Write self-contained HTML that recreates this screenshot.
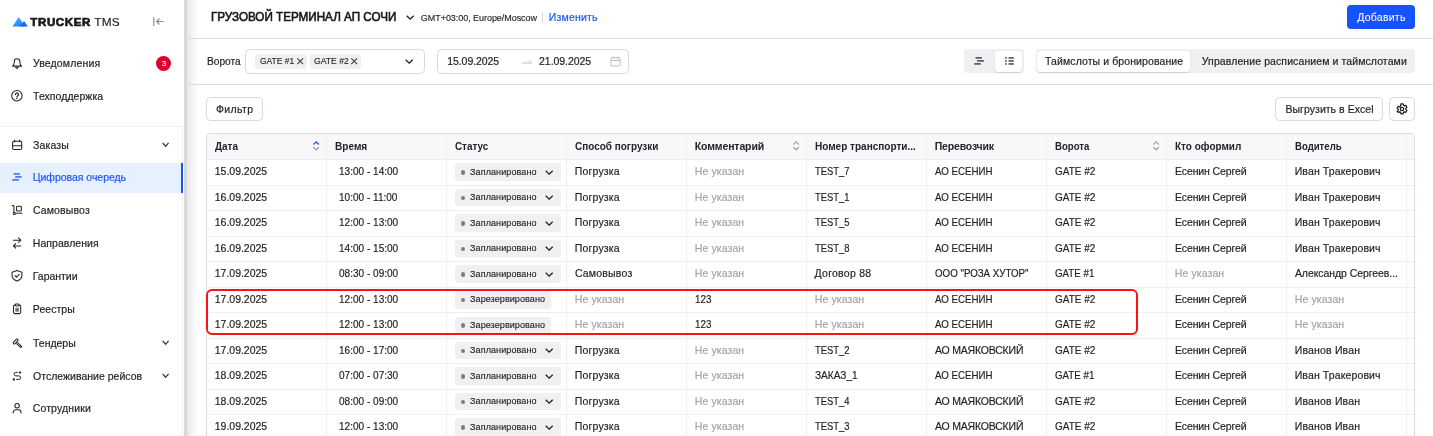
<!DOCTYPE html>
<html lang="ru"><head><meta charset="utf-8"><title>Цифровая очередь</title>
<style>
*{box-sizing:border-box;margin:0;padding:0}
html,body{width:1433px;height:436px;overflow:hidden;background:#fff}
body{font-family:"Liberation Sans",sans-serif;font-size:10.5px;color:#1f1f1f;position:relative}
.a{position:absolute;white-space:nowrap}
.t{position:absolute;white-space:nowrap;transform-origin:0 0;line-height:20px;height:20px;-webkit-text-stroke:0.180px currentColor}
.btn{border:1px solid #d7d9e0;border-radius:4.500px;background:#fff}
.tag{background:#f0f0f2;border-radius:3px}
svg{position:absolute;overflow:visible}
#root{position:absolute;left:0;top:0;width:1433px;height:436px;will-change:transform}
</style></head><body><div id="root">

<div class="a" style="left:0;top:126px;width:183px;height:311px;border-top:1px solid #f0f0f0;border-right:1px solid #f0f0f0"></div>
<div class="a" style="left:184px;top:0;width:3px;height:436px;background:#d8d9de"></div>
<div class="a" style="left:187px;top:0;width:11px;height:436px;background:linear-gradient(90deg,#e7e7ea 0,#f4f4f5 45%,#fff 100%)"></div>
<svg style="left:12px;top:16px" width="17" height="11" viewBox="0 0 17 11"><defs><linearGradient id="lg" x1="0" y1="0" x2="0" y2="1"><stop offset="0" stop-color="#45a8ff"/><stop offset="1" stop-color="#1f86ff"/></linearGradient></defs><path d="M0.6 10.5 L6.8 1 L13 10.5 Z" fill="url(#lg)"/><path d="M7.5 10.500 L12 5 L15.900 10.500 Z" fill="#1769f5"/></svg>
<div class="t" style="left:30.32px;top:12.00px;font-size:11.5px;font-weight:bold;color:#1a1a1a;letter-spacing:0.629px;-webkit-text-stroke:0.700px #1a1a1a;">TRUCKER</div>
<div class="t" style="left:94.35px;top:12.20px;font-size:11.8px;letter-spacing:0.230px;">TMS</div>
<svg style="left:152.500px;top:16.500px" width="11" height="9" viewBox="0 0 11 9" fill="none" stroke="#8a8a8a" stroke-width="1.100"><path d="M0.800 0V9M3.500 4.500H10.500M6.500 1.500L3.500 4.500L6.500 7.500"/></svg>
<div class="a" style="left:0;top:163px;width:181px;height:30px;background:#e6f0ff"></div><div class="a" style="left:180.700px;top:163px;width:2.300px;height:30px;background:#1b56f5"></div>
<svg style="left:0;top:0" width="184" height="436" viewBox="0 0 184 436" fill="none" stroke="#262626" stroke-width="1.050" stroke-linecap="round" stroke-linejoin="round">
<path d="M12.500 66.100C13.700 65.300 14.250 64.300 14.250 62.600V61.500a2.800 2.800 0 0 1 5.600 0V62.600c0 1.700.55 2.700 1.750 3.500Z"/><path d="M15.400 67.300h3.300l-1.650 1.500Z" fill="#222" stroke-width="0.600"/>
<circle cx="16.900" cy="95.700" r="5.200"/><path d="M15.450 94.500a1.500 1.500 0 1 1 2.250 1.300c-.55.300-.75.600-.75 1.100" stroke-width="1.250"/><circle cx="16.950" cy="98.600" r="0.750" fill="#222" stroke="none"/>
<rect x="12.600" y="141.200" width="9.100" height="8.200" rx="1.200"/><path d="M12.600 145.700H21.700M14.600 139.900V141.700M19.700 139.900V141.700"/>
<g fill="#4a7bfa" stroke="none"><rect x="13.700" y="173.100" width="6.200" height="1.700" rx="0.300"/><rect x="15.200" y="176.050" width="6.500" height="1.700" rx="0.300"/><rect x="12.200" y="179" width="6.600" height="1.700" rx="0.300"/></g>
<path d="M12.300 205.600h.8a.8.8 0 0 1 .8.800v5.800M15.600 213.200H22"/><circle cx="14.300" cy="213.400" r="1.050"/><rect x="16.600" y="206.300" width="4.700" height="4.700" rx="0.600"/>
<path d="M13.400 240.200H20.800M18.500 237.900L20.800 240.200L18.500 242.500M20.800 245.900H13.400M15.700 243.600L13.400 245.900L15.700 248.200"/>
<path d="M17 270.400L21.900 272.200V275.600c0 2.600-1.900 4.400-4.900 5.500c-3-1.100-4.900-2.900-4.900-5.500V272.200Z"/><path d="M14.900 275.700l1.500 1.500l2.800-2.900"/>
<rect x="13.500" y="305.100" width="7.200" height="8.500" rx="1.300"/><rect x="15.300" y="304" width="3.600" height="1.900" rx="0.600" fill="#fff"/><rect x="15.300" y="307.800" width="3.600" height="3.900" fill="#777" stroke="none"/>
<rect x="12.750" y="340.450" width="5.800" height="2.100" rx="0.700" transform="rotate(-45 15.650 341.500)"/><path d="M17.700 342.500L21.300 346.100a0.750 0.750 0 0 1-1.060 1.060L16.640 343.560"/>
<path d="M17.400 372.400H15.900a1.750 1.750 0 0 0 0 3.500H18.900a1.750 1.750 0 0 1 0 3.500H16.600" stroke-width="1"/><rect x="19" y="371.400" width="2.100" height="2.100" rx="0.500" fill="#262626" stroke="none"/><rect x="12.800" y="378.350" width="2.100" height="2.100" rx="0.500" fill="#262626" stroke="none"/>
<circle cx="17.100" cy="405.800" r="2.250"/><path d="M13.200 413v-.6a2.600 2.600 0 0 1 2.600-2.600h2.600a2.600 2.600 0 0 1 2.600 2.600v.6"/>
</svg>
<div class="t" style="left:33.02px;top:53.25px;letter-spacing:0.143px;">Уведомления</div>
<div class="t" style="left:33.05px;top:86.15px;letter-spacing:0.043px;">Техподдержка</div>
<div class="t" style="left:32.96px;top:134.95px;letter-spacing:0.166px;">Заказы</div>
<div class="t" style="left:32.80px;top:166.95px;color:#1b56f5;letter-spacing:-0.036px;">Цифровая очередь</div>
<div class="t" style="left:32.99px;top:200.15px;letter-spacing:0.127px;">Самовывоз</div>
<div class="t" style="left:32.80px;top:233.35px;letter-spacing:0.035px;">Направления</div>
<div class="t" style="left:32.80px;top:266.05px;letter-spacing:-0.028px;">Гарантии</div>
<div class="t" style="left:32.80px;top:299.05px;letter-spacing:0.059px;">Реестры</div>
<div class="t" style="left:33.05px;top:332.75px;letter-spacing:-0.028px;">Тендеры</div>
<div class="t" style="left:33.01px;top:365.75px;letter-spacing:0.012px;">Отслеживание рейсов</div>
<div class="t" style="left:32.69px;top:398.15px;letter-spacing:0.135px;">Сотрудники</div>
<div class="a" style="left:156px;top:56px;width:15px;height:15px;border-radius:8px;background:#e0002b"></div>
<div class="t" style="left:161.92px;top:54.00px;font-size:7.5px;-webkit-text-stroke-width:0.130px;color:#fff;">3</div>
<svg style="left:161.900px;top:141.7px" width="7.200" height="5.200" viewBox="0 0 7.200 5.200" fill="none" stroke="#3a3a3a" stroke-width="1.300"><path d="M0.600 0.900L3.600 4.200L6.600 0.900"/></svg>
<svg style="left:161.900px;top:339.5px" width="7.200" height="5.200" viewBox="0 0 7.200 5.200" fill="none" stroke="#3a3a3a" stroke-width="1.300"><path d="M0.600 0.900L3.600 4.200L6.600 0.900"/></svg>
<svg style="left:161.900px;top:372.5px" width="7.200" height="5.200" viewBox="0 0 7.200 5.200" fill="none" stroke="#3a3a3a" stroke-width="1.300"><path d="M0.600 0.900L3.600 4.200L6.600 0.900"/></svg>
<div class="a" style="left:188px;top:37.500px;width:1245px;height:1px;background:#dddde3"></div>
<div class="a" style="left:188px;top:83.500px;width:1245px;height:1px;background:#dddde3"></div>
<div class="t" style="left:210.80px;top:6.70px;font-size:12px;color:#16181c;transform:scaleX(0.9717);-webkit-text-stroke:0.600px #16181c;">ГРУЗОВОЙ ТЕРМИНАЛ АП СОЧИ</div>
<svg style="left:405.600px;top:14.800px" width="8.400" height="5" viewBox="0 0 8.400 5" fill="none" stroke="#1f1f1f" stroke-width="1.300"><path d="M0.700 0.700L4.200 4.200L7.700 0.700"/></svg>
<div class="t" style="left:420.83px;top:8.30px;font-size:9px;-webkit-text-stroke-width:0.130px;letter-spacing:-0.048px;">GMT+03:00, Europe/Moscow</div>
<div class="a" style="left:542px;top:11.500px;width:1px;height:11px;background:#d9d9d9"></div>
<div class="t" style="left:548.70px;top:7.40px;color:#1b56f5;letter-spacing:0.207px;">Изменить</div>
<div class="a" style="left:1347px;top:5px;width:68px;height:24px;border-radius:4px;background:#1753fa"></div>
<div class="t" style="left:1357.35px;top:6.80px;color:#fff;letter-spacing:0.229px;-webkit-text-stroke:0.050px #fff;">Добавить</div>
<div class="t" style="left:206.80px;top:51.30px;transform:scaleX(0.9642);">Ворота</div>
<div class="a btn" style="left:245px;top:49px;width:180px;height:25px"></div>
<div class="a tag" style="left:255px;top:54px;width:51.600px;height:15px"></div>
<div class="a tag" style="left:310px;top:54px;width:51px;height:15px"></div>
<div class="t" style="left:260.43px;top:51.10px;font-size:9px;-webkit-text-stroke-width:0.130px;transform:scaleX(0.9423);">GATE #1</div>
<div class="t" style="left:314.33px;top:51.10px;font-size:9px;-webkit-text-stroke-width:0.130px;transform:scaleX(0.9589);">GATE #2</div>
<svg style="left:296.8px;top:58.200px" width="6.400" height="6.400" viewBox="0 0 6.400 6.400" fill="none" stroke="#3a3a3a" stroke-width="1.050"><path d="M0.300 0.300L6.100 6.100M6.100 0.300L0.300 6.100"/></svg>
<svg style="left:351.2px;top:58.200px" width="6.400" height="6.400" viewBox="0 0 6.400 6.400" fill="none" stroke="#3a3a3a" stroke-width="1.050"><path d="M0.300 0.300L6.100 6.100M6.100 0.300L0.300 6.100"/></svg>
<svg style="left:405.200px;top:59px" width="8.400" height="5" viewBox="0 0 8.400 5" fill="none" stroke="#1f1f1f" stroke-width="1.300"><path d="M0.700 0.700L4.200 4.200L7.700 0.700"/></svg>
<div class="a btn" style="left:437px;top:49px;width:192px;height:25px"></div>
<div class="t" style="left:447.22px;top:50.50px;letter-spacing:-0.067px;">15.09.2025</div>
<div class="t" style="left:539.10px;top:50.50px;letter-spacing:-0.065px;">21.09.2025</div>
<svg style="left:522px;top:58.500px" width="10" height="5" viewBox="0 0 10 5" fill="none" stroke="#bfbfbf" stroke-width="0.900"><path d="M0 4H9.800L6.500 1.500"/></svg>
<svg style="left:609.500px;top:56px" width="11" height="11" viewBox="0 0 11 11" fill="none" stroke="#b5b5b5" stroke-width="0.900"><rect x="1" y="1.800" width="9" height="8.200" rx="0.800"/><path d="M1 4.500h9M3.300 0.500v2M7.700 0.500v2"/></svg>
<div class="a" style="left:964px;top:49.300px;width:59.700px;height:24px;border-radius:4px;background:#f0f0f2"></div>
<div class="a" style="left:995px;top:50.800px;width:27px;height:21px;border-radius:3px;background:#fff;box-shadow:0 1px 1.500px rgba(0,0,0,.15)"></div>
<svg style="left:974px;top:57px" width="10" height="8" viewBox="0 0 10 8" fill="#5a5d66"><rect x="1.500" y="0.100" width="6.500" height="1.700" rx="0.300"/><rect x="3" y="3.100" width="6.900" height="1.700" rx="0.300"/><rect x="0.200" y="6.100" width="6.600" height="1.700" rx="0.300"/></svg>
<svg style="left:1004.600px;top:57px" width="9" height="8" viewBox="0 0 9 8" fill="#5a5d66"><rect x="0.100" y="0.100" width="1.700" height="1.700"/><rect x="0.100" y="3.100" width="1.700" height="1.700"/><rect x="0.100" y="6.100" width="1.700" height="1.700"/><rect x="3.500" y="0.100" width="5.300" height="1.700"/><rect x="3.500" y="3.100" width="5.300" height="1.700"/><rect x="3.500" y="6.100" width="5.300" height="1.700"/></svg>
<div class="a" style="left:1036.300px;top:49.300px;width:378.700px;height:24px;border-radius:4px;background:#f0f0f2"></div>
<div class="a" style="left:1037px;top:50.800px;width:153px;height:21px;border-radius:3px;background:#fff;box-shadow:0 1px 1.500px rgba(0,0,0,.15)"></div>
<div class="t" style="left:1045.05px;top:51.00px;letter-spacing:0.095px;">Таймслоты и бронирование</div>
<div class="t" style="left:1201.82px;top:51.00px;letter-spacing:0.095px;">Управление расписанием и таймслотами</div>
<div class="a btn" style="left:206px;top:97px;width:57px;height:24px"></div>
<div class="t" style="left:215.92px;top:98.75px;letter-spacing:0.367px;">Фильтр</div>
<div class="a btn" style="left:1275px;top:97px;width:108px;height:24px"></div>
<div class="t" style="left:1285.50px;top:98.75px;letter-spacing:0.035px;">Выгрузить в Excel</div>
<div class="a btn" style="left:1389px;top:97px;width:26px;height:24px"></div>
<svg style="left:1396px;top:103px" width="12" height="12" viewBox="0 0 12 12" fill="none" stroke="#1f1f1f" stroke-width="1.250" stroke-linejoin="round"><path d="M4.900 0.800h2.200l.3 1.400 1 .6 1.400-.5 1.100 1.900-1.100 1v1.200l1.100 1-1.100 1.900-1.400-.5-1 .6-.3 1.400H4.900l-.3-1.400-1-.6-1.400.5L1.100 8.400l1.100-1V6.200l-1.100-1 1.100-1.900 1.400.5 1-.6Z"/><circle cx="6" cy="6" r="1.700"/></svg>
<div class="a" style="left:206px;top:133px;width:1209px;height:320px;border:1px solid #dddee5;border-bottom:none;border-radius:4px 4px 0 0;overflow:hidden"><div class="a" style="left:0;top:0;width:1209px;height:26px;background:#f8f8fb"></div></div>
<div class="a" style="left:207px;top:159.0px;width:1207px;height:1px;background:#ebebf0"></div>
<div class="a" style="left:207px;top:184.5px;width:1207px;height:1px;background:#efeff3"></div>
<div class="a" style="left:207px;top:210.0px;width:1207px;height:1px;background:#efeff3"></div>
<div class="a" style="left:207px;top:235.5px;width:1207px;height:1px;background:#efeff3"></div>
<div class="a" style="left:207px;top:261.0px;width:1207px;height:1px;background:#efeff3"></div>
<div class="a" style="left:207px;top:286.5px;width:1207px;height:1px;background:#efeff3"></div>
<div class="a" style="left:207px;top:312.0px;width:1207px;height:1px;background:#efeff3"></div>
<div class="a" style="left:207px;top:337.5px;width:1207px;height:1px;background:#efeff3"></div>
<div class="a" style="left:207px;top:363.0px;width:1207px;height:1px;background:#efeff3"></div>
<div class="a" style="left:207px;top:388.5px;width:1207px;height:1px;background:#efeff3"></div>
<div class="a" style="left:207px;top:414.0px;width:1207px;height:1px;background:#efeff3"></div>
<div class="a" style="left:326.0px;top:134px;width:1px;height:302px;background:#efeff3"></div>
<div class="a" style="left:446.0px;top:134px;width:1px;height:302px;background:#efeff3"></div>
<div class="a" style="left:566.0px;top:134px;width:1px;height:302px;background:#efeff3"></div>
<div class="a" style="left:686.0px;top:134px;width:1px;height:302px;background:#efeff3"></div>
<div class="a" style="left:806.0px;top:134px;width:1px;height:302px;background:#efeff3"></div>
<div class="a" style="left:926.0px;top:134px;width:1px;height:302px;background:#efeff3"></div>
<div class="a" style="left:1046.0px;top:134px;width:1px;height:302px;background:#efeff3"></div>
<div class="a" style="left:1166.0px;top:134px;width:1px;height:302px;background:#efeff3"></div>
<div class="a" style="left:1286.0px;top:134px;width:1px;height:302px;background:#efeff3"></div>
<div class="a" style="left:1406.0px;top:134px;width:1px;height:302px;background:#efeff3"></div>
<div class="t" style="left:215.00px;top:136.30px;font-weight:bold;color:#222427;transform:scaleX(0.9452);-webkit-text-stroke:0;">Дата</div>
<div class="t" style="left:334.71px;top:136.30px;font-weight:bold;color:#222427;transform:scaleX(0.9589);-webkit-text-stroke:0;">Время</div>
<div class="t" style="left:454.96px;top:136.30px;font-weight:bold;color:#222427;transform:scaleX(0.9396);-webkit-text-stroke:0;">Статус</div>
<div class="t" style="left:574.86px;top:136.30px;font-weight:bold;color:#222427;transform:scaleX(0.9486);-webkit-text-stroke:0;">Способ погрузки</div>
<div class="t" style="left:694.75px;top:136.30px;font-weight:bold;color:#222427;letter-spacing:-0.130px;-webkit-text-stroke:0;">Комментарий</div>
<div class="t" style="left:814.71px;top:136.30px;font-weight:bold;color:#222427;transform:scaleX(0.9537);-webkit-text-stroke:0;">Номер транспорти...</div>
<div class="t" style="left:934.75px;top:136.30px;font-weight:bold;color:#222427;letter-spacing:-0.177px;-webkit-text-stroke:0;">Перевозчик</div>
<div class="t" style="left:1054.72px;top:136.30px;font-weight:bold;color:#222427;transform:scaleX(0.9140);-webkit-text-stroke:0;">Ворота</div>
<div class="t" style="left:1174.56px;top:136.30px;font-weight:bold;color:#222427;transform:scaleX(0.9506);-webkit-text-stroke:0;">Кто оформил</div>
<div class="t" style="left:1294.72px;top:136.30px;font-weight:bold;color:#222427;transform:scaleX(0.9124);-webkit-text-stroke:0;">Водитель</div>
<svg style="left:312.9px;top:141.100px" width="6.400" height="9.400" viewBox="0 0 6.400 9.400" fill="none" stroke-width="1.3"><path d="M0.500 3.500L3.200 0.800L5.900 3.500" stroke="#1b56f5"/><path d="M0.500 6.100L3.200 8.800L5.900 6.100" stroke-width="1.100" stroke="#8c8c8c"/></svg>
<svg style="left:792.9px;top:141.100px" width="6.400" height="9.400" viewBox="0 0 6.400 9.400" fill="none" stroke-width="1.1"><path d="M0.500 3.500L3.200 0.800L5.900 3.500" stroke="#a6a6a6"/><path d="M0.500 6.100L3.200 8.800L5.900 6.100" stroke-width="1.100" stroke="#8c8c8c"/></svg>
<svg style="left:1152.7px;top:141.100px" width="6.400" height="9.400" viewBox="0 0 6.400 9.400" fill="none" stroke-width="1.1"><path d="M0.500 3.500L3.200 0.800L5.900 3.500" stroke="#a6a6a6"/><path d="M0.500 6.100L3.200 8.800L5.900 6.100" stroke-width="1.100" stroke="#8c8c8c"/></svg>
<div class="t" style="left:214.77px;top:161.20px;letter-spacing:-0.017px;">15.09.2025</div>
<div class="t" style="left:339.13px;top:161.20px;transform:scaleX(0.9567);">13:00 - 14:00</div>
<div class="a tag" style="left:455px;top:163.3px;width:106px;height:17.600px"></div>
<div class="a" style="left:460.800px;top:170.0px;width:4.400px;height:4.600px;border-radius:2.300px;background:#7d7d80"></div>
<div class="t" style="left:470.05px;top:161.90px;font-size:9px;-webkit-text-stroke-width:0.130px;letter-spacing:0.100px;">Запланировано</div>
<svg style="left:544.700px;top:169.6px" width="8.400" height="5" viewBox="0 0 8.400 5" fill="none" stroke="#1f1f1f" stroke-width="1.300"><path d="M0.700 0.700L4.200 4.200L7.700 0.700"/></svg>
<div class="t" style="left:574.70px;top:161.20px;letter-spacing:0.188px;">Погрузка</div>
<div class="t" style="left:694.75px;top:161.20px;color:#a4a4a9;letter-spacing:0.101px;">Не указан</div>
<div class="t" style="left:815.35px;top:161.20px;transform:scaleX(0.8955);">TEST_7</div>
<div class="t" style="left:935.00px;top:161.20px;transform:scaleX(0.9246);">АО ЕСЕНИН</div>
<div class="t" style="left:1055.29px;top:161.20px;transform:scaleX(0.9490);">GATE #2</div>
<div class="t" style="left:1175.00px;top:161.20px;letter-spacing:-0.116px;">Есенин Сергей</div>
<div class="t" style="left:1294.70px;top:161.20px;letter-spacing:0.120px;">Иван Тракерович</div>
<div class="t" style="left:214.77px;top:186.70px;letter-spacing:-0.017px;">16.09.2025</div>
<div class="t" style="left:339.13px;top:186.70px;transform:scaleX(0.9567);">10:00 - 11:00</div>
<div class="a tag" style="left:455px;top:188.8px;width:106px;height:17.600px"></div>
<div class="a" style="left:460.800px;top:195.5px;width:4.400px;height:4.600px;border-radius:2.300px;background:#7d7d80"></div>
<div class="t" style="left:470.05px;top:187.40px;font-size:9px;-webkit-text-stroke-width:0.130px;letter-spacing:0.100px;">Запланировано</div>
<svg style="left:544.700px;top:195.1px" width="8.400" height="5" viewBox="0 0 8.400 5" fill="none" stroke="#1f1f1f" stroke-width="1.300"><path d="M0.700 0.700L4.200 4.200L7.700 0.700"/></svg>
<div class="t" style="left:574.70px;top:186.70px;letter-spacing:0.188px;">Погрузка</div>
<div class="t" style="left:694.75px;top:186.70px;color:#a4a4a9;letter-spacing:0.101px;">Не указан</div>
<div class="t" style="left:815.35px;top:186.70px;transform:scaleX(0.8955);">TEST_1</div>
<div class="t" style="left:935.00px;top:186.70px;transform:scaleX(0.9246);">АО ЕСЕНИН</div>
<div class="t" style="left:1055.29px;top:186.70px;transform:scaleX(0.9490);">GATE #2</div>
<div class="t" style="left:1175.00px;top:186.70px;letter-spacing:-0.116px;">Есенин Сергей</div>
<div class="t" style="left:1294.70px;top:186.70px;letter-spacing:0.120px;">Иван Тракерович</div>
<div class="t" style="left:214.77px;top:212.20px;letter-spacing:-0.017px;">16.09.2025</div>
<div class="t" style="left:339.13px;top:212.20px;transform:scaleX(0.9567);">12:00 - 13:00</div>
<div class="a tag" style="left:455px;top:214.3px;width:106px;height:17.600px"></div>
<div class="a" style="left:460.800px;top:221.0px;width:4.400px;height:4.600px;border-radius:2.300px;background:#7d7d80"></div>
<div class="t" style="left:470.05px;top:212.90px;font-size:9px;-webkit-text-stroke-width:0.130px;letter-spacing:0.100px;">Запланировано</div>
<svg style="left:544.700px;top:220.6px" width="8.400" height="5" viewBox="0 0 8.400 5" fill="none" stroke="#1f1f1f" stroke-width="1.300"><path d="M0.700 0.700L4.200 4.200L7.700 0.700"/></svg>
<div class="t" style="left:574.70px;top:212.20px;letter-spacing:0.188px;">Погрузка</div>
<div class="t" style="left:694.75px;top:212.20px;color:#a4a4a9;letter-spacing:0.101px;">Не указан</div>
<div class="t" style="left:815.35px;top:212.20px;transform:scaleX(0.8955);">TEST_5</div>
<div class="t" style="left:935.00px;top:212.20px;transform:scaleX(0.9246);">АО ЕСЕНИН</div>
<div class="t" style="left:1055.29px;top:212.20px;transform:scaleX(0.9490);">GATE #2</div>
<div class="t" style="left:1175.00px;top:212.20px;letter-spacing:-0.116px;">Есенин Сергей</div>
<div class="t" style="left:1294.70px;top:212.20px;letter-spacing:0.120px;">Иван Тракерович</div>
<div class="t" style="left:214.77px;top:237.70px;letter-spacing:-0.017px;">16.09.2025</div>
<div class="t" style="left:339.13px;top:237.70px;transform:scaleX(0.9567);">14:00 - 15:00</div>
<div class="a tag" style="left:455px;top:239.8px;width:106px;height:17.600px"></div>
<div class="a" style="left:460.800px;top:246.5px;width:4.400px;height:4.600px;border-radius:2.300px;background:#7d7d80"></div>
<div class="t" style="left:470.05px;top:238.40px;font-size:9px;-webkit-text-stroke-width:0.130px;letter-spacing:0.100px;">Запланировано</div>
<svg style="left:544.700px;top:246.1px" width="8.400" height="5" viewBox="0 0 8.400 5" fill="none" stroke="#1f1f1f" stroke-width="1.300"><path d="M0.700 0.700L4.200 4.200L7.700 0.700"/></svg>
<div class="t" style="left:574.70px;top:237.70px;letter-spacing:0.188px;">Погрузка</div>
<div class="t" style="left:694.75px;top:237.70px;color:#a4a4a9;letter-spacing:0.101px;">Не указан</div>
<div class="t" style="left:815.35px;top:237.70px;transform:scaleX(0.8955);">TEST_8</div>
<div class="t" style="left:935.00px;top:237.70px;transform:scaleX(0.9246);">АО ЕСЕНИН</div>
<div class="t" style="left:1055.29px;top:237.70px;transform:scaleX(0.9490);">GATE #2</div>
<div class="t" style="left:1175.00px;top:237.70px;letter-spacing:-0.116px;">Есенин Сергей</div>
<div class="t" style="left:1294.70px;top:237.70px;letter-spacing:0.120px;">Иван Тракерович</div>
<div class="t" style="left:214.77px;top:263.20px;letter-spacing:-0.017px;">17.09.2025</div>
<div class="t" style="left:339.13px;top:263.20px;transform:scaleX(0.9567);">08:30 - 09:00</div>
<div class="a tag" style="left:455px;top:265.3px;width:106px;height:17.600px"></div>
<div class="a" style="left:460.800px;top:272.0px;width:4.400px;height:4.600px;border-radius:2.300px;background:#7d7d80"></div>
<div class="t" style="left:470.05px;top:263.90px;font-size:9px;-webkit-text-stroke-width:0.130px;letter-spacing:0.100px;">Запланировано</div>
<svg style="left:544.700px;top:271.6px" width="8.400" height="5" viewBox="0 0 8.400 5" fill="none" stroke="#1f1f1f" stroke-width="1.300"><path d="M0.700 0.700L4.200 4.200L7.700 0.700"/></svg>
<div class="t" style="left:574.89px;top:263.20px;letter-spacing:0.202px;">Самовывоз</div>
<div class="t" style="left:694.75px;top:263.20px;color:#a4a4a9;letter-spacing:0.101px;">Не указан</div>
<div class="t" style="left:814.55px;top:263.20px;letter-spacing:0.256px;">Договор 88</div>
<div class="t" style="left:934.91px;top:263.20px;transform:scaleX(0.9272);">ООО &quot;РОЗА ХУТОР&quot;</div>
<div class="t" style="left:1055.09px;top:263.20px;transform:scaleX(0.9276);">GATE #1</div>
<div class="t" style="left:1174.75px;top:263.20px;color:#a4a4a9;letter-spacing:0.101px;">Не указан</div>
<div class="t" style="left:1294.95px;top:263.20px;letter-spacing:-0.071px;">Александр Сергеев...</div>
<div class="t" style="left:214.77px;top:288.70px;letter-spacing:-0.017px;">17.09.2025</div>
<div class="t" style="left:339.13px;top:288.70px;transform:scaleX(0.9567);">12:00 - 13:00</div>
<div class="a tag" style="left:455px;top:291.2px;width:95.500px;height:17.400px"></div>
<div class="a" style="left:460.800px;top:297.7px;width:4.400px;height:4.600px;border-radius:2.300px;background:#7d7d80"></div>
<div class="t" style="left:470.05px;top:289.30px;font-size:9px;-webkit-text-stroke-width:0.130px;letter-spacing:0.080px;">Зарезервировано</div>
<div class="t" style="left:574.75px;top:288.70px;color:#a4a4a9;letter-spacing:0.101px;">Не указан</div>
<div class="t" style="left:695.34px;top:288.70px;transform:scaleX(0.9333);">123</div>
<div class="t" style="left:814.75px;top:288.70px;color:#a4a4a9;letter-spacing:0.101px;">Не указан</div>
<div class="t" style="left:935.00px;top:288.70px;transform:scaleX(0.9246);">АО ЕСЕНИН</div>
<div class="t" style="left:1055.29px;top:288.70px;transform:scaleX(0.9490);">GATE #2</div>
<div class="t" style="left:1175.00px;top:288.70px;letter-spacing:-0.116px;">Есенин Сергей</div>
<div class="t" style="left:1294.75px;top:288.70px;color:#a4a4a9;letter-spacing:0.101px;">Не указан</div>
<div class="t" style="left:214.77px;top:314.20px;letter-spacing:-0.017px;">17.09.2025</div>
<div class="t" style="left:339.13px;top:314.20px;transform:scaleX(0.9567);">12:00 - 13:00</div>
<div class="a tag" style="left:455px;top:316.7px;width:95.500px;height:17.400px"></div>
<div class="a" style="left:460.800px;top:323.2px;width:4.400px;height:4.600px;border-radius:2.300px;background:#7d7d80"></div>
<div class="t" style="left:470.05px;top:314.80px;font-size:9px;-webkit-text-stroke-width:0.130px;letter-spacing:0.080px;">Зарезервировано</div>
<div class="t" style="left:574.75px;top:314.20px;color:#a4a4a9;letter-spacing:0.101px;">Не указан</div>
<div class="t" style="left:695.34px;top:314.20px;transform:scaleX(0.9333);">123</div>
<div class="t" style="left:814.75px;top:314.20px;color:#a4a4a9;letter-spacing:0.101px;">Не указан</div>
<div class="t" style="left:935.00px;top:314.20px;transform:scaleX(0.9246);">АО ЕСЕНИН</div>
<div class="t" style="left:1055.29px;top:314.20px;transform:scaleX(0.9490);">GATE #2</div>
<div class="t" style="left:1175.00px;top:314.20px;letter-spacing:-0.116px;">Есенин Сергей</div>
<div class="t" style="left:1294.75px;top:314.20px;color:#a4a4a9;letter-spacing:0.101px;">Не указан</div>
<div class="t" style="left:214.77px;top:339.70px;letter-spacing:-0.017px;">17.09.2025</div>
<div class="t" style="left:339.13px;top:339.70px;transform:scaleX(0.9567);">16:00 - 17:00</div>
<div class="a tag" style="left:455px;top:341.8px;width:106px;height:17.600px"></div>
<div class="a" style="left:460.800px;top:348.5px;width:4.400px;height:4.600px;border-radius:2.300px;background:#7d7d80"></div>
<div class="t" style="left:470.05px;top:340.40px;font-size:9px;-webkit-text-stroke-width:0.130px;letter-spacing:0.100px;">Запланировано</div>
<svg style="left:544.700px;top:348.1px" width="8.400" height="5" viewBox="0 0 8.400 5" fill="none" stroke="#1f1f1f" stroke-width="1.300"><path d="M0.700 0.700L4.200 4.200L7.700 0.700"/></svg>
<div class="t" style="left:574.70px;top:339.70px;letter-spacing:0.188px;">Погрузка</div>
<div class="t" style="left:694.75px;top:339.70px;color:#a4a4a9;letter-spacing:0.101px;">Не указан</div>
<div class="t" style="left:815.35px;top:339.70px;transform:scaleX(0.8955);">TEST_2</div>
<div class="t" style="left:934.95px;top:339.70px;letter-spacing:-0.192px;">АО МАЯКОВСКИЙ</div>
<div class="t" style="left:1055.29px;top:339.70px;transform:scaleX(0.9490);">GATE #2</div>
<div class="t" style="left:1175.00px;top:339.70px;letter-spacing:-0.116px;">Есенин Сергей</div>
<div class="t" style="left:1294.70px;top:339.70px;letter-spacing:0.175px;">Иванов Иван</div>
<div class="t" style="left:214.77px;top:365.20px;letter-spacing:-0.017px;">18.09.2025</div>
<div class="t" style="left:339.13px;top:365.20px;transform:scaleX(0.9567);">07:00 - 07:30</div>
<div class="a tag" style="left:455px;top:367.3px;width:106px;height:17.600px"></div>
<div class="a" style="left:460.800px;top:374.0px;width:4.400px;height:4.600px;border-radius:2.300px;background:#7d7d80"></div>
<div class="t" style="left:470.05px;top:365.90px;font-size:9px;-webkit-text-stroke-width:0.130px;letter-spacing:0.100px;">Запланировано</div>
<svg style="left:544.700px;top:373.6px" width="8.400" height="5" viewBox="0 0 8.400 5" fill="none" stroke="#1f1f1f" stroke-width="1.300"><path d="M0.700 0.700L4.200 4.200L7.700 0.700"/></svg>
<div class="t" style="left:574.70px;top:365.20px;letter-spacing:0.188px;">Погрузка</div>
<div class="t" style="left:694.75px;top:365.20px;color:#a4a4a9;letter-spacing:0.101px;">Не указан</div>
<div class="t" style="left:814.91px;top:365.20px;transform:scaleX(0.9623);">ЗАКАЗ_1</div>
<div class="t" style="left:935.00px;top:365.20px;transform:scaleX(0.9246);">АО ЕСЕНИН</div>
<div class="t" style="left:1055.09px;top:365.20px;transform:scaleX(0.9276);">GATE #1</div>
<div class="t" style="left:1175.00px;top:365.20px;letter-spacing:-0.116px;">Есенин Сергей</div>
<div class="t" style="left:1294.70px;top:365.20px;letter-spacing:0.120px;">Иван Тракерович</div>
<div class="t" style="left:214.77px;top:390.70px;letter-spacing:-0.017px;">18.09.2025</div>
<div class="t" style="left:339.13px;top:390.70px;transform:scaleX(0.9567);">08:00 - 09:00</div>
<div class="a tag" style="left:455px;top:392.8px;width:106px;height:17.600px"></div>
<div class="a" style="left:460.800px;top:399.5px;width:4.400px;height:4.600px;border-radius:2.300px;background:#7d7d80"></div>
<div class="t" style="left:470.05px;top:391.40px;font-size:9px;-webkit-text-stroke-width:0.130px;letter-spacing:0.100px;">Запланировано</div>
<svg style="left:544.700px;top:399.1px" width="8.400" height="5" viewBox="0 0 8.400 5" fill="none" stroke="#1f1f1f" stroke-width="1.300"><path d="M0.700 0.700L4.200 4.200L7.700 0.700"/></svg>
<div class="t" style="left:574.70px;top:390.70px;letter-spacing:0.188px;">Погрузка</div>
<div class="t" style="left:694.75px;top:390.70px;color:#a4a4a9;letter-spacing:0.101px;">Не указан</div>
<div class="t" style="left:815.35px;top:390.70px;transform:scaleX(0.8955);">TEST_4</div>
<div class="t" style="left:934.95px;top:390.70px;letter-spacing:-0.192px;">АО МАЯКОВСКИЙ</div>
<div class="t" style="left:1055.29px;top:390.70px;transform:scaleX(0.9490);">GATE #2</div>
<div class="t" style="left:1175.00px;top:390.70px;letter-spacing:-0.116px;">Есенин Сергей</div>
<div class="t" style="left:1294.70px;top:390.70px;letter-spacing:0.175px;">Иванов Иван</div>
<div class="t" style="left:214.77px;top:416.20px;letter-spacing:-0.017px;">19.09.2025</div>
<div class="t" style="left:339.13px;top:416.20px;transform:scaleX(0.9567);">12:00 - 13:00</div>
<div class="a tag" style="left:455px;top:418.3px;width:106px;height:17.600px"></div>
<div class="a" style="left:460.800px;top:425.0px;width:4.400px;height:4.600px;border-radius:2.300px;background:#7d7d80"></div>
<div class="t" style="left:470.05px;top:416.90px;font-size:9px;-webkit-text-stroke-width:0.130px;letter-spacing:0.100px;">Запланировано</div>
<svg style="left:544.700px;top:424.6px" width="8.400" height="5" viewBox="0 0 8.400 5" fill="none" stroke="#1f1f1f" stroke-width="1.300"><path d="M0.700 0.700L4.200 4.200L7.700 0.700"/></svg>
<div class="t" style="left:574.70px;top:416.20px;letter-spacing:0.188px;">Погрузка</div>
<div class="t" style="left:694.75px;top:416.20px;color:#a4a4a9;letter-spacing:0.101px;">Не указан</div>
<div class="t" style="left:815.35px;top:416.20px;transform:scaleX(0.8955);">TEST_3</div>
<div class="t" style="left:934.95px;top:416.20px;letter-spacing:-0.192px;">АО МАЯКОВСКИЙ</div>
<div class="t" style="left:1055.29px;top:416.20px;transform:scaleX(0.9490);">GATE #2</div>
<div class="t" style="left:1175.00px;top:416.20px;letter-spacing:-0.116px;">Есенин Сергей</div>
<div class="t" style="left:1294.70px;top:416.20px;letter-spacing:0.175px;">Иванов Иван</div>
<div class="a" style="left:206px;top:288.600px;width:932px;height:46.400px;border:2px solid #fb1212;border-radius:6px"></div>
</div></body></html>
